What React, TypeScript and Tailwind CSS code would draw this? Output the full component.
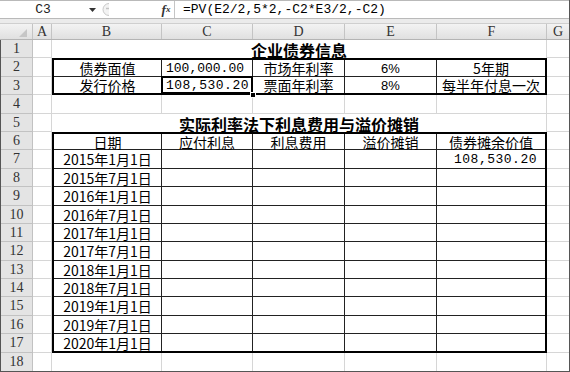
const CJK = "font-['Noto_Sans_CJK_SC',sans-serif]";
const MONO = "font-['Liberation_Mono',monospace]";
const SERIF = "font-['Liberation_Serif',serif]";

// sheet row heights, rows 1..18
const ROW_H = [
  "h-[18px]", "h-[19px]", "h-[18px]", "h-[19px]", "h-[18px]", "h-[18px]",
  "h-[19px]", "h-[18px]", "h-[19px]", "h-[18px]", "h-[18px]", "h-[19px]",
  "h-[18px]", "h-[18px]", "h-[19px]", "h-[18px]", "h-[19px]", "h-[18px]",
];

// inner rows of the second table (rows 6..17), minus the thick frame
const T2_H = [
  "h-[16px]", "h-[19px]", "h-[18px]", "h-[19px]", "h-[18px]", "h-[18px]",
  "h-[19px]", "h-[18px]", "h-[18px]", "h-[19px]", "h-[18px]", "h-[17px]",
];

const COLS = [
  { key: "A", w: "w-[19px]" },
  { key: "B", w: "w-[110px]" },
  { key: "C", w: "w-[91px]" },
  { key: "D", w: "w-[92px]" },
  { key: "E", w: "w-[92px]" },
  { key: "F", w: "w-[110px]" },
  { key: "G", w: "w-[22px]" },
];

const PLAIN_W = ["w-[110px]", "w-[91px]", "w-[92px]", "w-[92px]", "w-[110px]"];
const BOX_W = ["w-[108px]", "w-[91px]", "w-[92px]", "w-[92px]", "w-[108px]"];

const DATES = [
  "2015年1月1日", "2015年7月1日", "2016年1月1日", "2016年7月1日",
  "2017年1月1日", "2017年7月1日", "2018年1月1日", "2018年7月1日",
  "2019年1月1日", "2019年7月1日", "2020年1月1日",
];

const HEAD = ["日期", "应付利息", "利息费用", "溢价摊销", "债券摊余价值"];

function FormulaBar() {
  return (
    <div className="flex h-[19px] border-t border-b border-[#b9b9b9] bg-white">
      <div className={`flex w-[86px] items-center justify-center text-[13px] text-[#222] ${MONO}`}>
        C3
      </div>
      <div className="flex w-[12px] items-center justify-center">
        <svg width="7" height="4" viewBox="0 0 7 4">
          <path d="M0 0h7L3.5 4z" fill="#333" />
        </svg>
      </div>
      <div className="flex w-[18px] items-center justify-center">
        <svg width="14" height="15" viewBox="0 0 14 15">
          <path d="M9 1.5A6 6 0 1 0 9 13.5" fill="#f3f3f3" stroke="#c9c9c9" />
          <path d="M6 6.5h3" stroke="#c4c4c4" strokeWidth="1.5" />
        </svg>
      </div>
      <div className="w-[42px]" />
      <div className={`flex w-[16px] items-center justify-center text-[13px] font-bold italic text-[#333] ${SERIF}`}>
        f<span className="text-[9px]">x</span>
      </div>
      <div className={`flex flex-1 items-center border-l border-[#c5c5c5] pl-[8px] text-[13px] text-black ${MONO}`}>
        =PV(E2/2,5*2,-C2*E3/2,-C2)
      </div>
    </div>
  );
}

function ColumnHeaders() {
  return (
    <div className="flex h-[16px] border-b border-[#b4b4b4] bg-gradient-to-b from-[#f3f3f3] to-[#e0e0e0]">
      <div className="flex w-[33px] items-end justify-end border-r border-[#c4c4c4] pr-[5px] pb-[2px]">
        <svg width="8" height="8" viewBox="0 0 8 8">
          <path d="M8 0V8H0z" fill="#c6c6c6" />
        </svg>
      </div>
      {COLS.map((c) => (
        <div
          key={c.key}
          className={`flex ${c.w} items-center justify-center border-r border-[#c4c4c4] text-[14px] leading-none text-[#333] last:border-r-0 ${SERIF}`}
        >
          {c.key}
        </div>
      ))}
    </div>
  );
}

function Selection() {
  return (
    <div className="absolute inset-[-1px] border-2 border-black">
      <div className="absolute right-[-5px] bottom-[-6px] h-[6px] w-[6px] border border-white bg-black" />
    </div>
  );
}

function InfoTable() {
  const rows = [
    ["债券面值", "100,000.00", "市场年利率", "6%", "5年期"],
    ["发行价格", "108,530.20", "票面年利率", "8%", "每半年付息一次"],
  ];
  return (
    <div className="h-[37px] border-2 border-black">
      {rows.map((r, ri) => (
        <div
          key={ri}
          className={`flex ${ri === 0 ? "h-[17px] border-b border-[#222]" : "h-[16px]"}`}
        >
          {r.map((v, ci) => {
            const num = ci === 1;
            const pct = ci === 3;
            return (
              <div
                key={ci}
                className={`relative flex ${BOX_W[ci]} items-center ${num ? "justify-start pl-[4px]" : "justify-center"} ${ci < 4 ? "border-r border-[#222]" : ""} leading-none ${
                  num
                    ? `text-[13px] ${MONO} ${ri === 1 ? "tracking-[0.5px]" : ""}`
                    : pct
                      ? "font-['Liberation_Sans',sans-serif] text-[13px]"
                      : "text-[14px]"
                }`}
              >
                {v}
                {ri === 1 && ci === 1 && <Selection />}
              </div>
            );
          })}
        </div>
      ))}
    </div>
  );
}

function ScheduleTable() {
  const rows: string[][] = [HEAD];
  DATES.forEach((d, i) => rows.push([d, "", "", "", i === 0 ? "108,530.20" : ""]));
  return (
    <div className="h-[221px] border-2 border-black">
      {rows.map((r, ri) => (
        <div
          key={ri}
          className={`flex ${T2_H[ri]} ${ri < rows.length - 1 ? "border-b border-[#222]" : ""}`}
        >
          {r.map((v, ci) => {
            const money = ri > 0 && ci === 4;
            return (
              <div
                key={ci}
                className={`flex ${BOX_W[ci]} ${ri === 0 ? "items-end" : "items-center"} ${money ? "justify-end pr-[8px]" : "justify-center"} ${ci < 4 ? "border-r border-[#222]" : ""} leading-none ${
                  money ? `text-[13px] tracking-[0.5px] ${MONO}` : "text-[14px]"
                }`}
              >
                {v}
              </div>
            );
          })}
        </div>
      ))}
    </div>
  );
}

function PlainRow({ h }: { h: string }) {
  return (
    <div className={`flex ${h}`}>
      {PLAIN_W.map((w, i) => (
        <div key={i} className={`${w} border-r border-b border-[#d6d6d6]`} />
      ))}
    </div>
  );
}

function Title({ h, text }: { h: string; text: string }) {
  return (
    <div className={`flex ${h} items-end justify-center border-r border-[#d6d6d6]`}>
      <span className="text-[16px] leading-[15px] font-bold underline decoration-1 underline-offset-[1px]">
        {text}
      </span>
    </div>
  );
}

export default function App() {
  return (
    <div className={`h-[372px] w-[570px] overflow-hidden border-r border-[#555] bg-white text-black ${CJK}`}>
      <FormulaBar />
      <div className="h-[5px] border-b border-[#cfcfcf] bg-[#ebebeb]" />
      <ColumnHeaders />

      <div className="flex border-l border-b border-[#555]">
        {/* row numbers */}
        <div className="flex w-[32px] flex-col">
          {ROW_H.map((h, i) => (
            <div
              key={i}
              className={`flex ${h} items-center justify-center border-r border-b border-[#c2c2c2] bg-[#e4e4e4] text-[14px] leading-none text-[#333] last:border-b-0 ${SERIF}`}
            >
              {i + 1}
            </div>
          ))}
        </div>

        {/* column A */}
        <div className="flex w-[19px] flex-col">
          {ROW_H.map((h, i) => (
            <div key={i} className={`${h} border-r border-b border-[#d6d6d6] last:border-b-0`} />
          ))}
        </div>

        {/* B..F */}
        <div className="flex w-[495px] flex-col">
          <Title h={ROW_H[0]} text="企业债券信息" />
          <InfoTable />
          <PlainRow h={ROW_H[3]} />
          <Title h={ROW_H[4]} text="实际利率法下利息费用与溢价摊销" />
          <ScheduleTable />
          <div className="flex h-[18px]">
            {PLAIN_W.map((w, i) => (
              <div key={i} className={`${w} border-r border-[#d6d6d6]`} />
            ))}
          </div>
        </div>

        {/* column G */}
        <div className="flex w-[22px] flex-col">
          {ROW_H.map((h, i) => (
            <div key={i} className={`${h} border-b border-[#d6d6d6] last:border-b-0`} />
          ))}
        </div>
      </div>
    </div>
  );
}
